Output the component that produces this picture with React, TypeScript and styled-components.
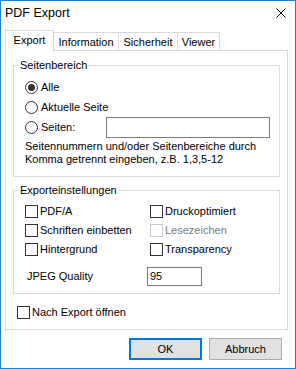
import React from 'react';
import styled, { createGlobalStyle } from 'styled-components';

const Global = createGlobalStyle`
  html, body { margin: 0; padding: 0; background: #fff; }
  *, *::before, *::after { box-sizing: border-box; }
`;

const Window = styled.div`
  width: 296px;
  height: 369px;
  border: 1px solid #1883d7;
  background: #fff;
  display: flex;
  flex-direction: column;
  font-family: "Liberation Sans", Arial, sans-serif;
  font-size: 11px;
  color: #000;
`;

const TitleBar = styled.div`
  height: 29px;
  flex: none;
  display: flex;
  align-items: center;
  justify-content: space-between;
  padding: 0 9px 5px 4px;
`;

const Title = styled.div`
  font-size: 12.5px;
`;

const CloseIcon = styled.svg`
  width: 10px;
  height: 10px;
  display: block;
`;

const TabStrip = styled.div`
  height: 21px;
  flex: none;
  display: flex;
  align-items: flex-end;
  padding-left: 4px;
`;

const Tab = styled.div<{ $active?: boolean; $w: number }>`
  width: ${p => p.$w}px;
  height: ${p => (p.$active ? 21 : 18)}px;
  margin-left: ${p => (p.$active ? 0 : -1)}px;
  margin-bottom: ${p => (p.$active ? 0 : 1)}px;
  border: 1px solid #d9d9d9;
  border-bottom: none;
  background: #fff;
  position: relative;
  z-index: ${p => (p.$active ? 2 : 1)};
  display: flex;
  justify-content: center;
  align-items: flex-start;
  padding-top: 3px;
  line-height: 13px;
  white-space: nowrap;
`;

const Panel = styled.div`
  margin-left: 4px;
  margin-top: -1px;
  width: 283px;
  height: 280px;
  flex: none;
  border: 1px solid #d9d9d9;
  padding: 0 7px;
  display: flex;
  flex-direction: column;
`;

const Group = styled.fieldset<{ $top: number; $pt: number; $pb: number }>`
  margin: ${p => p.$top}px 0 0 0;
  padding: ${p => p.$pt}px 8px ${p => p.$pb}px 11px;
  border: 1px solid #dcdcdc;
  min-width: 0;
`;

const Legend = styled.legend`
  padding: 0 1px;
  margin-left: -6px;
  line-height: 13px;
`;

const Row = styled.div<{ $h?: number }>`
  height: ${p => p.$h ?? 20}px;
  display: flex;
  align-items: center;
  white-space: nowrap;
`;

const Radio = styled.span<{ $checked?: boolean }>`
  width: 13px;
  height: 13px;
  flex: none;
  border: 1px solid #333;
  border-radius: 50%;
  background: #fff;
  display: flex;
  align-items: center;
  justify-content: center;
  margin-right: 3px;
  &::after {
    content: '';
    width: 7px;
    height: 7px;
    border-radius: 50%;
    background: #333;
    display: ${p => (p.$checked ? 'block' : 'none')};
  }
`;

const Box = styled.span<{ $disabled?: boolean }>`
  width: 13px;
  height: 13px;
  flex: none;
  border: 1px solid ${p => (p.$disabled ? '#cccccc' : '#333')};
  background: #fff;
  margin-right: 2px;
`;

const Label = styled.span<{ $disabled?: boolean }>`
  color: ${p => (p.$disabled ? '#7a7a7a' : '#000')};
  line-height: 13px;
`;

const RadioLabel = styled.div`
  width: 81px;
  display: flex;
  align-items: center;
`;

const TextBox = styled.div<{ $w: number; $h: number }>`
  width: ${p => p.$w}px;
  height: ${p => p.$h}px;
  border: 1px solid #7a7a7a;
  background: #fff;
  padding: 0 2px;
  display: flex;
  align-items: center;
  line-height: 13px;
`;

const Hint = styled.div`
  margin-top: 2px;
  line-height: 13px;
`;

const Grid = styled.div`
  display: grid;
  grid-template-columns: 125px 1fr;
  grid-auto-rows: 19px;
`;

const CheckRow = styled.div`
  display: flex;
  align-items: center;
  white-space: nowrap;
`;

const QualityRow = styled.div`
  margin-top: 8px;
  height: 19px;
  display: grid;
  grid-template-columns: 125px 1fr;
  align-items: center;
`;

const QualityLabel = styled.span`
  padding-left: 2px;
  line-height: 13px;
`;

const QualityInput = styled(TextBox)`
  margin-left: -3px;
`;

const OpenRow = styled(CheckRow)`
  margin-top: 9px;
  margin-left: 4px;
  height: 19px;
`;

const ButtonBar = styled.div`
  margin-top: 8px;
  display: flex;
  justify-content: flex-end;
  gap: 7px;
  padding-right: 13px;
`;

const Button = styled.div<{ $default?: boolean }>`
  width: 73px;
  height: 22px;
  background: #e1e1e1;
  border: ${p => (p.$default ? '2px solid #0078d7' : '1px solid #adadad')};
  display: flex;
  align-items: center;
  justify-content: center;
  line-height: 13px;
`;

const tabs = [
  { label: 'Export', w: 49, active: true },
  { label: 'Information', w: 66 },
  { label: 'Sicherheit', w: 60 },
  { label: 'Viewer', w: 43 },
];

export default function App() {
  return (
    <>
      <Global />
      <Window>
        <TitleBar>
          <Title>PDF Export</Title>
          <CloseIcon viewBox="0 0 10 10">
            <path d="M0.5 0.5 L9.5 9.5 M9.5 0.5 L0.5 9.5" stroke="#000" strokeWidth="1" fill="none" />
          </CloseIcon>
        </TitleBar>
        <TabStrip>
          {tabs.map(t => (
            <Tab key={t.label} $active={t.active} $w={t.w}>{t.label}</Tab>
          ))}
        </TabStrip>
        <Panel>
          <Group $top={8} $pt={5} $pb={10}>
            <Legend>Seitenbereich</Legend>
            <Row><Radio $checked /><Label>Alle</Label></Row>
            <Row><Radio /><Label>Aktuelle Seite</Label></Row>
            <Row $h={21}>
              <RadioLabel><Radio /><Label>Seiten:</Label></RadioLabel>
              <TextBox $w={164} $h={21} />
            </Row>
            <Hint>
              Seitennummern und/oder Seitenbereiche durch<br />
              Komma getrennt eingeben, z.B. 1,3,5-12
            </Hint>
          </Group>
          <Group $top={7} $pt={5} $pb={7}>
            <Legend>Exporteinstellungen</Legend>
            <Grid>
              <CheckRow><Box /><Label>PDF/A</Label></CheckRow>
              <CheckRow><Box /><Label>Druckoptimiert</Label></CheckRow>
              <CheckRow><Box /><Label>Schriften einbetten</Label></CheckRow>
              <CheckRow><Box $disabled /><Label $disabled>Lesezeichen</Label></CheckRow>
              <CheckRow><Box /><Label>Hintergrund</Label></CheckRow>
              <CheckRow><Box /><Label>Transparency</Label></CheckRow>
            </Grid>
            <QualityRow>
              <QualityLabel>JPEG Quality</QualityLabel>
              <QualityInput $w={55} $h={19}>95</QualityInput>
            </QualityRow>
          </Group>
          <OpenRow><Box /><Label>Nach Export öffnen</Label></OpenRow>
        </Panel>
        <ButtonBar>
          <Button $default>OK</Button>
          <Button>Abbruch</Button>
        </ButtonBar>
      </Window>
    </>
  );
}
